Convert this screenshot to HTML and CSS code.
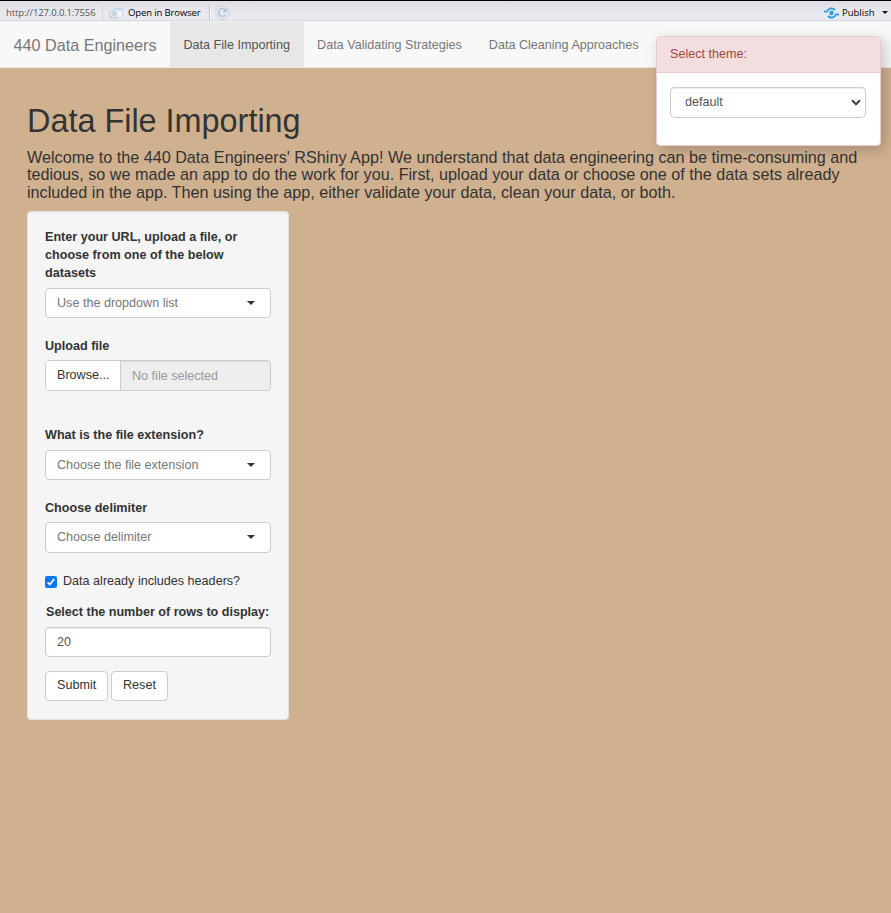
FILE: index.html
```
<!DOCTYPE html>
<html lang="en">
<head>
<meta charset="utf-8">
<title>440 Data Engineers</title>
<link rel="stylesheet" href="styles.css">
</head>
<body>
<header class="toolbar">
  <span class="address">http://127.0.0.1:7556</span>
  <span class="divider"></span>
  <svg class="window-icon" width="14" height="12" viewBox="0 0 14 12"><rect x="4.5" y="1" width="9" height="9.5" rx="1" fill="#f0f5f9" stroke="#d0dae4"/><path d="M4 1h10v2.500H4z" fill="#c3dcec"/><rect x=".7" y="4.700" width="7" height="6.600" rx="1" fill="#e4e8ee" stroke="#c3ccd7"/><path d="M2 10l4-4M3.500 6H6v2.500" fill="none" stroke="#b4bfcc"/></svg>
  <span class="open">Open in Browser</span>
  <span class="divider strong"></span>
  <svg class="reload" width="15" height="15" viewBox="0 0 15 15"><circle cx="7.5" cy="7.5" r="6.800" fill="#e6ebf2" stroke="#c8d0dc"/><path d="M10.800 9.600A3.900 3.900 0 1 1 10.200 4.600" fill="none" stroke="#b7c4d5" stroke-width="1.700"/><path d="M12 2.500v4.700H7.300z" fill="#b7c4d5"/></svg>
  <span class="spacer"></span>
  <svg class="publish-icon" width="15" height="12" viewBox="0 0 15 12"><circle cx="7.5" cy="6" r="2.200" fill="#2f98da"/><path d="M0 4.500h3C4.300 1.200 8.500.3 11 3M15 7.500h-3C10.700 10.800 6.500 11.700 4 9" fill="none" stroke="#32a4e2" stroke-width="2"/></svg>
  <span class="publish">Publish</span>
  <span class="caret small"></span>
</header>
<nav class="navbar">
  <a class="brand">440 Data Engineers</a>
  <a class="tab active">Data File Importing</a>
  <a class="tab">Data Validating Strategies</a>
  <a class="tab">Data Cleaning Approaches</a>
</nav>
<main class="page">
  <h1>Data File Importing</h1>
  <h4>Welcome to the 440 Data Engineers' RShiny App! We understand that data engineering can be time-consuming and<br>tedious, so we made an app to do the work for you. First, upload your data or choose one of the data sets already<br>included in the app. Then using the app, either validate your data, clean your data, or both.</h4>
  <form class="well">
    <div class="group dataset">
      <div class="label">Enter your URL, upload a file, or<br>choose from one of the below<br>datasets</div>
      <div class="control">Use the dropdown list<span class="caret"></span></div>
    </div>
    <div class="group upload">
      <div class="label">Upload file</div>
      <div class="file"><span class="browse">Browse...</span><span class="filename">No file selected</span></div>
    </div>
    <div class="group">
      <div class="label">What is the file extension?</div>
      <div class="control">Choose the file extension<span class="caret"></span></div>
    </div>
    <div class="group delimiter">
      <div class="label">Choose delimiter</div>
      <div class="control">Choose delimiter<span class="caret"></span></div>
    </div>
    <div class="check"><svg class="box" width="12" height="12" viewBox="0 0 12 12"><rect width="12" height="12" rx="2" fill="#0b76f3"/><path d="M2.600 6.300l2.200 2.200 4.500-5.600" fill="none" stroke="#fff" stroke-width="1.700"/></svg>Data already includes headers?</div>
    <div class="group rows">
      <div class="label">Select the number of rows to display:</div>
      <div class="control number">20</div>
    </div>
    <div class="buttons"><span class="btn submit">Submit</span><span class="btn reset">Reset</span></div>
  </form>
</main>
<aside class="theme">
  <div class="theme-head">Select theme:</div>
  <div class="theme-body">
    <div class="theme-select">default<svg class="chevron" width="10" height="7" viewBox="0 0 10 7"><path d="M1 1.300l4 4 4-4" fill="none" stroke="#444" stroke-width="2"/></svg></div>
  </div>
</aside>
</body>
</html>
```
FILE: styles.css
```
* { box-sizing: border-box; }
body {
  margin: 0;
  min-height: 913px;
  background: #d0b18f;
  color: #333;
  font: 12.6px/18px "Liberation Sans", Arial, sans-serif;
  white-space: nowrap;
  overflow: hidden;
}
.toolbar {
  display: flex;
  align-items: center;
  height: 22px;
  padding: 2px 3px 0 6px;
  border-top: 1px solid #000;
  background: linear-gradient(#dfdce6, #e9eaef 12px, #e9eaef 19px, #d5d9de 19px, #d5d9de 20px, #f2f3f4 20px);
  color: #000;
  font: 9.5px/18px "Open Sans", sans-serif;
}
.address { width: 90px; color: #555; letter-spacing: -.13px; }
.divider { width: 1px; height: 16px; margin: 0 6px; background: #d5d6dc; }
.divider.strong { margin: 0 5px 0 9px; background: #bfc2ca; box-shadow: 1px 0 #f8f8fa; }
.open { width: 72px; margin-left: 5px; letter-spacing: -.12px; }
.spacer { flex: 1; }
.publish { width: 33px; margin: 0 7px 0 3px; }
.caret { border: 4px solid transparent; border-top-color: #333; border-bottom: 0; }
.caret.small { border-width: 3px 3px 0; border-top-color: #111; }
.navbar {
  display: flex;
  height: 46px;
  background: #f8f8f8;
  border-bottom: 1px solid #e7e7e7;
  color: #777;
}
.brand { width: 170px; padding: 14px 13.5px; font-size: 16.2px; }
.tab { padding: 14px 13.5px; }
.tab.active { width: 133.6px; background: #e7e7e7; color: #555; }
.page { padding: 36px 27px 0; }
h1 { margin: 0 0 9px; font-size: 32.4px; line-height: 35.6px; font-weight: 500; }
h4 { margin: 0 0 9px; font-size: 16.2px; line-height: 17.82px; font-weight: 500; }
.well {
  width: 262px;
  height: 509px;
  padding: 16px 17px;
  background: #f5f5f5;
  border: 1px solid #e3e3e3;
  border-radius: 4px;
  box-shadow: inset 0 1px 1px rgba(0, 0, 0, .05);
}
.label { margin-bottom: 6px; font-weight: 700; }
.group { margin-bottom: 19px; }
.control {
  display: flex;
  align-items: center;
  justify-content: space-between;
  height: 30px;
  padding: 0 15px 1px 11px;
  background: #fff;
  border: 1px solid #ccc;
  border-radius: 4px;
  color: #777;
}
.file { display: flex; height: 31px; border: 1px solid #ccc; border-radius: 4px; background: #eee; overflow: hidden; }
.browse { width: 75px; padding: 5px 0 0 11px; background: #fff; border-right: 1px solid #ccc; }
.filename { flex: 1; padding: 6px 0 0 11px; color: #999; box-shadow: inset 0 1px 1px rgba(0, 0, 0, .075); }
.upload { margin-bottom: 35px; }
.upload .label, .delimiter .label { margin-bottom: 5px; }
.delimiter .control { height: 31px; }
.check { display: flex; margin-bottom: 13px; }
.box { margin: 4px 6px 0 0; }
.rows { margin-bottom: 14px; }
.rows .label { padding-left: 1px; letter-spacing: -.02px; }
.number { color: #555; box-shadow: inset 0 1px 1px rgba(0, 0, 0, .075); }
.buttons { display: flex; gap: 3px; }
.btn { height: 30px; padding: 4px 11px; background: #fff; border: 1px solid #ccc; border-radius: 4px; }
.submit { width: 63px; }
.reset { width: 57px; }
.theme {
  position: absolute;
  left: 656px;
  top: 36px;
  width: 225px;
  height: 110px;
  background: #fff;
  border: 1px solid #ebccd1;
  border-radius: 4px;
  box-shadow: 4px 4px 14px rgba(0, 0, 0, .2);
}
.theme-head {
  height: 36px;
  padding: 8px 13px;
  background: #f2dede;
  border-bottom: 1px solid #ebccd1;
  border-radius: 3px 3px 0 0;
  color: #a94442;
}
.theme-body { padding: 14px 14px 0 13px; }
.theme-select {
  display: flex;
  align-items: center;
  justify-content: space-between;
  height: 31px;
  padding: 0 4px 1px 14px;
  border: 1px solid #ccc;
  border-radius: 4px;
  color: #555;
  box-shadow: inset 0 1px 1px rgba(0, 0, 0, .075);
}
```
